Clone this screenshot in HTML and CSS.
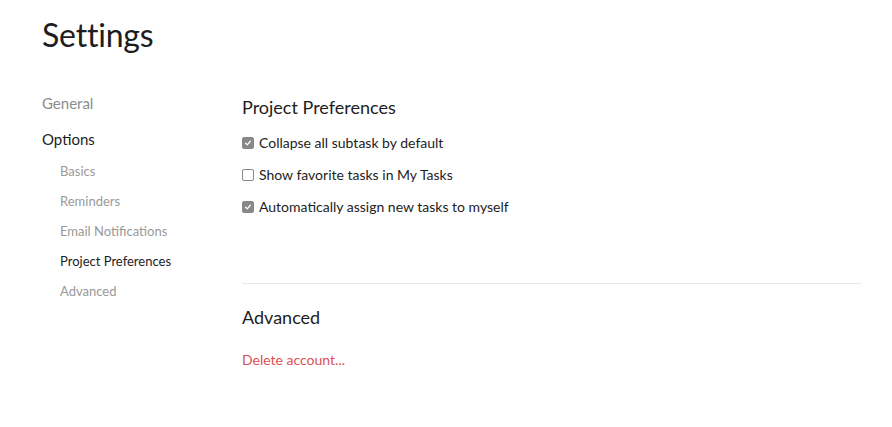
FILE: index.html
```html
<!DOCTYPE html>
<html>
<head>
<meta charset="utf-8">
<link rel="stylesheet" href="styles.css">
</head>
<body>
<div class="page">
  <h1 class="title">Settings</h1>
  <div class="layout">
    <nav class="side">
      <div class="side-top">General</div>
      <div class="side-top active">Options</div>
      <div class="side-sub">Basics</div>
      <div class="side-sub">Reminders</div>
      <div class="side-sub">Email Notifications</div>
      <div class="side-sub active">Project Preferences</div>
      <div class="side-sub">Advanced</div>
    </nav>
    <main class="main">
      <section class="section">
        <h2 class="sec-title">Project Preferences</h2>
        <label class="opt"><span class="box checked"><svg viewBox="0 0 12 12" width="12" height="12"><path d="M3.2 6.3 L5.1 8.2 L8.8 3.9" fill="none" stroke="#fff" stroke-width="1.5" stroke-linecap="round" stroke-linejoin="round"/></svg></span>Collapse all subtask by default</label>
        <label class="opt"><span class="box"></span>Show favorite tasks in My Tasks</label>
        <label class="opt"><span class="box checked"><svg viewBox="0 0 12 12" width="12" height="12"><path d="M3.2 6.3 L5.1 8.2 L8.8 3.9" fill="none" stroke="#fff" stroke-width="1.5" stroke-linecap="round" stroke-linejoin="round"/></svg></span>Automatically assign new tasks to myself</label>
      </section>
      <hr class="divider">
      <section class="section">
        <h2 class="sec-title">Advanced</h2>
        <a class="danger" href="#">Delete account...</a>
      </section>
    </main>
  </div>
</div>
</body>
</html>
```
FILE: styles.css
```css
* { box-sizing: border-box; }
html, body { margin: 0; padding: 0; background: #fff; }
body { font-family: Lato, "Liberation Sans", sans-serif; color: #1a1a1a; }
.page { padding: 14px 31px 0 42px; }
.title { margin: 0; font-size: 32px; font-weight: 400; line-height: 42px; color: #1d1d1d; letter-spacing: -0.2px; }
.layout { display: flex; margin-top: 37px; }
.side { width: 200px; display: flex; flex-direction: column; }
.side-top { font-size: 15px; line-height: 20px; color: #8c8c8c; margin-bottom: 16px; }
.side-top.active { color: #1d1d1d; margin-bottom: 12px; }
.side-sub { font-size: 13px; line-height: 20px; color: #999; padding-left: 18px; margin-bottom: 10px; }
.side-sub.active { color: #1d1d1d; }
.main { flex: 1; display: flex; flex-direction: column; }
.section { display: flex; flex-direction: column; }
.sec-title { margin: 2px 0 14px; font-size: 18px; font-weight: 400; line-height: 24px; color: #1d1d1d; }
.opt { display: flex; align-items: center; font-size: 14px; line-height: 20px; color: #1d1d1d; margin-bottom: 12px; }
.box { width: 12px; height: 12px; border: 1px solid #8a8a8a; border-radius: 2px; margin-right: 5px; display: flex; align-items: center; justify-content: center; background: #fff; }
.box.checked { background: #888; border-color: #888; }
.box svg { display: block; }
.divider { border: 0; border-top: 1px solid #e6e6e6; margin: 54px 0 19px; }
.danger { font-size: 14px; line-height: 20px; color: #dc4f57; text-decoration: none; margin-top: 7px; align-self: flex-start; }
```
